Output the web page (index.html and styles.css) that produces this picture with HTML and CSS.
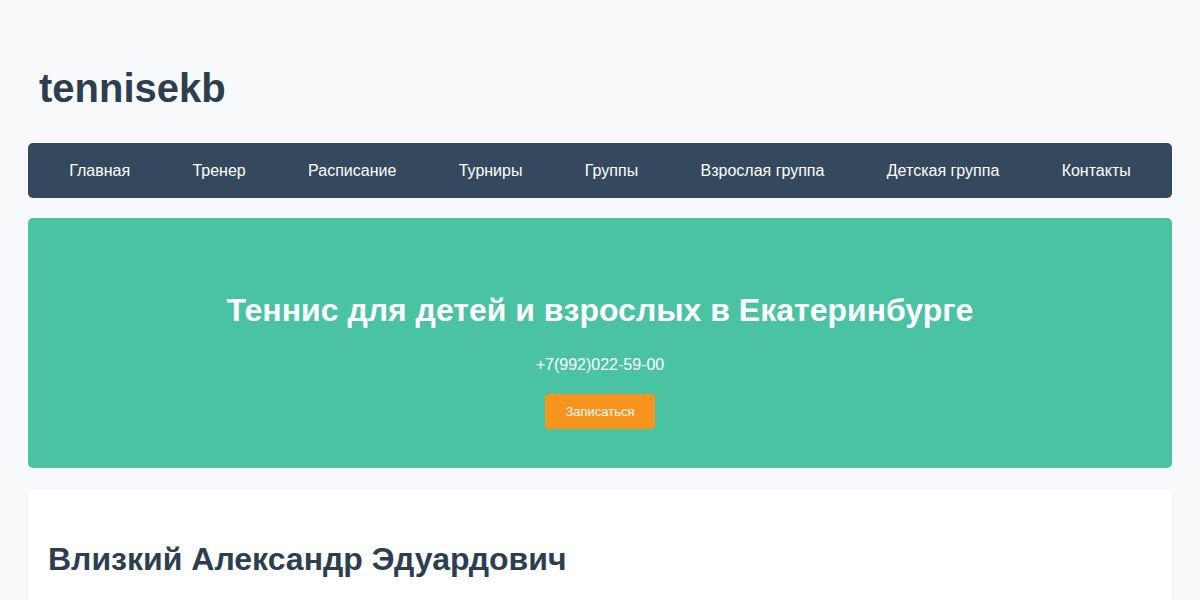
FILE: index.html
```html
<!DOCTYPE html>
<html lang="ru">
<head>
    <meta charset="utf-8">
    <title>tennisekb</title>
    <link rel="stylesheet" href="styles.css">
</head>
<body>
    <div class="page">
        <header class="site-header">
            <h1>tennisekb</h1>
        </header>

        <nav class="main-nav">
            <a href="#">Главная</a>
            <a href="#">Тренер</a>
            <a href="#">Расписание</a>
            <a href="#">Турниры</a>
            <a href="#">Группы</a>
            <a href="#">Взрослая группа</a>
            <a href="#">Детская группа</a>
            <a href="#">Контакты</a>
        </nav>

        <section class="hero">
            <h2>Теннис для детей и взрослых в Екатеринбурге</h2>
            <p class="phone">+7(992)022-59-00</p>
            <button type="button" class="signup">Записаться</button>
        </section>

        <section class="card">
            <h2>Влизкий Александр Эдуардович</h2>
        </section>
    </div>
</body>
</html>
```

FILE: styles.css
```css
body {
    margin: 0;
    font-family: "Liberation Sans", Arial, sans-serif;
    background-color: #f8f9fb;
    color: #2c3e50;
}

.page {
    padding: 0 28px;
}

.site-header {
    padding: 65px 11px 32px;
}

.site-header h1 {
    margin: 0;
    font-size: 40px;
    line-height: 46px;
    color: #2c3e50;
}

.main-nav {
    display: flex;
    justify-content: space-around;
    align-items: center;
    height: 55px;
    padding: 0 10px;
    background-color: #34495e;
    border-radius: 5px;
}

.main-nav a {
    color: #fff;
    text-decoration: none;
    font-size: 16px;
}

.hero {
    margin-top: 20px;
    padding: 74px 20px 39px;
    background-color: #4ac3a3;
    border-radius: 5px;
    text-align: center;
    color: #fff;
}

.hero h2 {
    margin: 0 0 27px;
    font-size: 32px;
    line-height: 37px;
}

.phone {
    margin: 0 0 20px;
    font-size: 16px;
    line-height: 18px;
}

.signup {
    width: 110px;
    height: 35px;
    border: none;
    border-radius: 4px;
    background-color: #f7941d;
    color: #fff;
    font-family: inherit;
    font-size: 13px;
    cursor: pointer;
}

.card {
    margin-top: 21px;
    padding: 20px;
    min-height: 200px;
    background-color: #fff;
    border-radius: 5px;
    box-shadow: 0 1px 4px rgba(0, 0, 0, 0.05);
}

.card h2 {
    margin: 32px 0;
    font-size: 32px;
    line-height: 37px;
    color: #2c3e50;
}
```
